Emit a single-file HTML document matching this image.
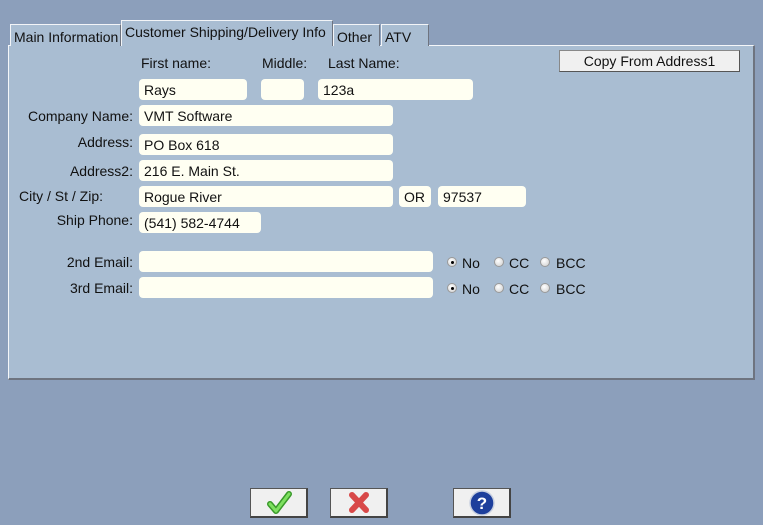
<!DOCTYPE html><html><head><style>
body{margin:0;width:763px;height:525px;background:#8c9fbb;font-family:"Liberation Sans",sans-serif;font-size:14px;color:#111;position:relative;overflow:hidden}
.a{position:absolute}
.panel{left:8px;top:45px;width:747px;height:335px;background:#a9bdd2;border:1px solid #f4f6f9;border-right:2px solid #6e7480;border-bottom:2px solid #6e7480;box-sizing:border-box}
.tab{top:23px;height:22px;background:#a9bdd2;border:1px solid #f2f4f7;border-bottom:none;box-sizing:border-box;padding:4px 0 0 3px;border-right:1px solid #6e7480}
.f{background:#fffff2;border-radius:4px;height:21px;line-height:22px;padding-left:5px;box-sizing:border-box}
.l{text-align:right;width:133px;left:0}
.r{width:10px;height:10px;border-radius:50%;background:radial-gradient(circle at 40% 35%,#fff,#ccc);border:1px solid #999;box-sizing:border-box}
.r.on::after{content:"";position:absolute;left:2.5px;top:2.5px;width:3px;height:3px;border-radius:50%;background:#000}
.btn{top:488px;width:58px;height:30px;background:#f0f0f0;border:1px solid #555;border-right:2px solid #444;border-bottom:2px solid #444;box-sizing:border-box}
</style></head><body>
<div class="a panel"></div>
<div class="a tab" style="left:10px;width:111px;top:24px">Main Information</div>
<div class="a tab" style="left:121px;width:212px;top:20px;height:26px;padding-top:3px">Customer Shipping/Delivery Info</div>
<div class="a tab" style="left:333px;width:47px;top:24px">Other</div>
<div class="a tab" style="left:381px;width:48px;top:24px">ATV</div>
<div class="a" style="left:141px;top:55px">First name:</div>
<div class="a" style="left:262px;top:55px">Middle:</div>
<div class="a" style="left:328px;top:55px">Last Name:</div>
<div class="a" style="left:559px;top:50px;width:181px;height:22px;background:#f0f0f0;border:1px solid #888;border-right-color:#555;border-bottom-color:#555;box-sizing:border-box;text-align:center;line-height:20px">Copy From Address1</div>
<div class="a f" style="left:139px;top:79px;width:108px">Rays</div>
<div class="a f" style="left:261px;top:79px;width:43px"></div>
<div class="a f" style="left:318px;top:79px;width:155px">123a</div>
<div class="a l" style="top:108px">Company Name:</div><div class="a f" style="left:139px;top:105px;width:254px">VMT Software</div>
<div class="a l" style="top:134px">Address:</div><div class="a f" style="left:139px;top:134px;width:254px">PO Box 618</div>
<div class="a l" style="top:163px">Address2:</div><div class="a f" style="left:139px;top:160px;width:254px">216 E. Main St.</div>
<div class="a" style="left:19px;top:188px">City / St / Zip:</div><div class="a f" style="left:139px;top:186px;width:254px">Rogue River</div>
<div class="a f" style="left:399px;top:186px;width:32px">OR</div>
<div class="a f" style="left:438px;top:186px;width:88px">97537</div>
<div class="a l" style="top:212px">Ship Phone:</div><div class="a f" style="left:139px;top:212px;width:122px">(541) 582-4744</div>
<div class="a l" style="top:254px">2nd Email:</div><div class="a f" style="left:139px;top:251px;width:294px"></div>
<div class="a l" style="top:280px">3rd Email:</div><div class="a f" style="left:139px;top:277px;width:294px"></div>
<div class="a r on" style="left:447px;top:257px"></div><div class="a" style="left:462px;top:255px">No</div>
<div class="a r" style="left:494px;top:257px"></div><div class="a" style="left:509px;top:255px">CC</div>
<div class="a r" style="left:540px;top:257px"></div><div class="a" style="left:556px;top:255px">BCC</div>
<div class="a r on" style="left:447px;top:283px"></div><div class="a" style="left:462px;top:281px">No</div>
<div class="a r" style="left:494px;top:283px"></div><div class="a" style="left:509px;top:281px">CC</div>
<div class="a r" style="left:540px;top:283px"></div><div class="a" style="left:556px;top:281px">BCC</div>
<div class="a btn" style="left:250px"><svg width="56" height="28"><path d="M19 15 L25 22 L38 5" stroke="#3a9a2a" stroke-width="6" fill="none" stroke-linecap="round" stroke-linejoin="round"/><path d="M19 15 L25 22 L38 5" stroke="#7ee060" stroke-width="3" fill="none" stroke-linecap="round" stroke-linejoin="round"/></svg></div>
<div class="a btn" style="left:330px"><svg width="56" height="28"><path d="M21 6 L35 21 M35 6 L21 21" stroke="#d84848" stroke-width="6" stroke-linecap="round"/></svg></div>
<div class="a btn" style="left:453px"><svg width="56" height="28"><circle cx="28" cy="14" r="12" fill="#1d3f9c" stroke="#c8d0e0" stroke-width="1.5"/><text x="28" y="20" text-anchor="middle" fill="#fff" font-family="Liberation Sans" font-weight="bold" font-size="17">?</text></svg></div>
</body></html>
